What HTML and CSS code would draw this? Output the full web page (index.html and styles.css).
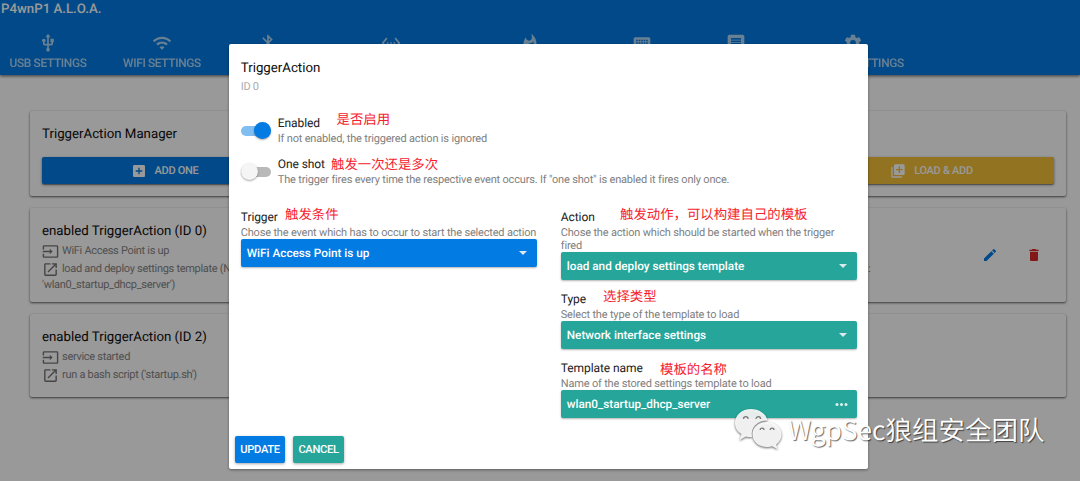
FILE: index.html
```html
<!DOCTYPE html>
<html lang="en">
<head>
<meta charset="utf-8">
<title>P4wnP1 A.L.O.A.</title>
<link rel="stylesheet" href="styles.css">
</head>
<body>
<header class="header">
  <div class="brand">P4wnP1 A.L.O.A.</div>
  <nav class="tabs">
    <div class="tab"><svg viewBox="0 0 24 24"><path d="M15 7v4h1v2h-3V5h2l-3-4-3 4h2v8H8v-2.070c.7-.37 1.200-1.080 1.200-1.930 0-1.210-.99-2.200-2.200-2.200S4.800 7.790 4.800 9c0 .85.5 1.560 1.200 1.930V13c0 1.110.89 2 2 2h3v3.050c-.71.37-1.200 1.100-1.200 1.950a2.200 2.200 0 0 0 4.400 0c0-.85-.49-1.580-1.200-1.950V15h3c1.110 0 2-.89 2-2v-2h1V7z"/></svg><span>USB SETTINGS</span></div>
    <div class="tab"><svg viewBox="0 0 24 24"><path d="M1 9l2 2c4.970-4.970 13.030-4.970 18 0l2-2C16.930 2.930 7.080 2.930 1 9zm8 8l3 3 3-3c-1.650-1.660-4.340-1.660-6 0zm-4-4l2 2c2.760-2.760 7.240-2.760 10 0l2-2C15.140 9.140 8.870 9.140 5 13z"/></svg><span>WIFI SETTINGS</span></div>
    <div class="tab"><svg viewBox="0 0 24 24"><path d="M17.710 7.710L12 2h-1v7.590L6.410 5 5 6.410 10.590 12 5 17.590 6.410 19 11 14.410V22h1l5.710-5.710-4.300-4.290 4.300-4.290zM13 5.830l1.880 1.880L13 9.590V5.830zm1.880 10.460L13 18.170v-3.760l1.880 1.880z"/></svg><span>BLUETOOTH</span></div>
    <div class="tab"><svg viewBox="0 0 24 24"><path d="M7.770 6.760L6.230 5.480.82 12l5.410 6.520 1.540-1.280L3.420 12l4.350-5.240zM7 13h2v-2H7v2zm10-2h-2v2h2v-2zm-6 2h2v-2h-2v2zm6.770-7.520l-1.540 1.280L20.580 12l-4.350 5.240 1.540 1.280L23.180 12l-5.410-6.520z"/></svg><span>NETWORK SETTINGS</span></div>
    <div class="tab"><svg viewBox="0 0 24 24"><path d="M13.500.67s.74 2.650.74 4.800c0 2.060-1.350 3.730-3.410 3.730-2.070 0-3.630-1.670-3.630-3.730l.03-.36C5.210 7.510 4 10.620 4 14c0 4.420 3.580 8 8 8s8-3.580 8-8C20 8.610 17.410 3.800 13.500.67zM11.710 19c-1.780 0-3.220-1.400-3.220-3.140 0-1.620 1.050-2.760 2.810-3.120 1.770-.36 3.600-1.210 4.620-2.580.39 1.290.59 2.650.59 4.040 0 2.650-2.150 4.800-4.800 4.800z"/></svg><span>TRIGGER ACTIONS</span></div>
    <div class="tab"><svg viewBox="0 0 24 24"><path d="M20 5H4c-1.100 0-1.990.9-1.990 2L2 17c0 1.100.9 2 2 2h16c1.100 0 2-.9 2-2V7c0-1.100-.9-2-2-2zm-9 3h2v2h-2V8zm0 3h2v2h-2v-2zM8 8h2v2H8V8zm0 3h2v2H8v-2zm-1 2H5v-2h2v2zm0-3H5V8h2v2zm9 7H8v-2h8v2zm0-4h-2v-2h2v2zm0-3h-2V8h2v2zm3 3h-2v-2h2v2zm0-3h-2V8h2v2z"/></svg><span>HIDSCRIPT</span></div>
    <div class="tab"><svg viewBox="0 0 24 24"><path d="M20 2H4c-1.100 0-2 .9-2 2v12c0 1.100.9 2 2 2h14l4 4V4c0-1.100-.9-2-2-2zm-2 12H6v-2h12v2zm0-3H6V9h12v2zm0-3H6V6h12v2z"/></svg><span>EVENT LOG</span></div>
    <div class="tab"><svg viewBox="0 0 24 24"><path d="M19.430 12.980c.04-.32.07-.64.07-.98s-.03-.66-.07-.98l2.110-1.650c.19-.15.24-.42.12-.64l-2-3.460c-.12-.22-.39-.3-.61-.22l-2.490 1c-.52-.4-1.080-.73-1.690-.98l-.38-2.650C14.460 2.180 14.250 2 14 2h-4c-.25 0-.46.18-.49.42l-.38 2.650c-.61.25-1.170.59-1.690.98l-2.490-1c-.23-.09-.49 0-.61.22l-2 3.460c-.13.22-.07.49.12.64l2.110 1.650c-.04.32-.07.65-.07.98s.03.66.07.98l-2.110 1.650c-.19.15-.24.42-.12.64l2 3.460c.12.22.39.3.61.22l2.490-1c.52.4 1.080.73 1.690.98l.38 2.650c.03.24.24.42.49.42h4c.25 0 .46-.18.49-.42l.38-2.650c.61-.25 1.170-.59 1.690-.98l2.490 1c.23.09.49 0 .61-.22l2-3.460c.12-.22.07-.49-.12-.64l-2.110-1.650zM12 15.500a3.500 3.500 0 1 1 0-7 3.500 3.500 0 0 1 0 7z"/></svg><span>GENERIC SETTINGS</span></div>
  </nav>
</header>
<main class="page">
  <section class="card manager">
    <h2 class="card-title">TriggerAction Manager</h2>
    <div class="manager-buttons">
      <div class="wide-btn blue"><svg viewBox="0 0 24 24"><path d="M19 3H5c-1.110 0-2 .9-2 2v14c0 1.100.89 2 2 2h14c1.100 0 2-.9 2-2V5c0-1.100-.9-2-2-2zm-2 10h-4v4h-2v-4H7v-2h4V7h2v4h4v2z"/></svg><span>ADD ONE</span></div>
      <div class="wide-btn amber"><svg viewBox="0 0 24 24"><path d="M4 6H2v14c0 1.100.9 2 2 2h14v-2H4V6zm16-4H8c-1.100 0-2 .9-2 2v12c0 1.100.9 2 2 2h12c1.100 0 2-.9 2-2V4c0-1.100-.9-2-2-2zm-1 9h-4v4h-2v-4H9V9h4V5h2v4h4v2z"/></svg><span>LOAD &amp; ADD</span></div>
    </div>
  </section>
  <section class="card entry entry-first">
    <div class="entry-text">
      <h2 class="card-title">enabled TriggerAction (ID 0)</h2>
      <p class="line"><svg viewBox="0 0 24 24"><path d="M21 3.010H3c-1.100 0-2 .9-2 2V9h2V4.990h18v14.030H3V15H1v4.010c0 1.100.9 1.980 2 1.980h18c1.100 0 2-.88 2-1.980v-14c0-1.110-.9-2-2-2zM11 16l4-4-4-4v3H1v2h10v3z"/></svg>WiFi Access Point is up</p>
      <p class="line"><svg viewBox="0 0 24 24"><path d="M19 19H5V5h7V3H5c-1.110 0-2 .9-2 2v14c0 1.100.89 2 2 2h14c1.100 0 2-.9 2-2v-7h-2v7zM14 3v2h3.590l-9.830 9.830 1.410 1.410L19 6.410V10h2V3h-7z"/></svg>load and deploy settings template (Network interface settings:</p>
      <p class="line">'wlan0_startup_dhcp_server')</p>
    </div>
    <div class="entry-actions">
      <svg class="edit" viewBox="0 0 24 24"><path d="M3 17.250V21h3.750L17.810 9.940l-3.750-3.750L3 17.250zM20.710 7.040a1 1 0 0 0 0-1.410l-2.340-2.340a1 1 0 0 0-1.410 0l-1.830 1.830 3.750 3.750 1.830-1.830z"/></svg>
      <svg class="trash" viewBox="0 0 24 24"><path d="M6 19c0 1.100.9 2 2 2h8c1.100 0 2-.9 2-2V7H6v12zM19 4h-3.500l-1-1h-5l-1 1H5v2h14V4z"/></svg>
    </div>
    <span class="cut">:</span>
  </section>
  <section class="card entry">
    <div class="entry-text">
      <h2 class="card-title">enabled TriggerAction (ID 2)</h2>
      <p class="line"><svg viewBox="0 0 24 24"><path d="M21 3.010H3c-1.100 0-2 .9-2 2V9h2V4.990h18v14.030H3V15H1v4.010c0 1.100.9 1.980 2 1.980h18c1.100 0 2-.88 2-1.980v-14c0-1.110-.9-2-2-2zM11 16l4-4-4-4v3H1v2h10v3z"/></svg>service started</p>
      <p class="line"><svg viewBox="0 0 24 24"><path d="M19 19H5V5h7V3H5c-1.110 0-2 .9-2 2v14c0 1.100.89 2 2 2h14c1.100 0 2-.9 2-2v-7h-2v7zM14 3v2h3.590l-9.830 9.830 1.410 1.410L19 6.410V10h2V3h-7z"/></svg>run a bash script ('startup.sh')</p>
    </div>
  </section>
</main>
<div class="backdrop">
  <div class="modal">
    <div class="modal-head">
      <div class="modal-title">TriggerAction</div>
      <div class="modal-sub">ID 0</div>
    </div>
    <div class="switch-row">
      <span class="toggle on"></span>
      <div class="field"><div class="label">Enabled</div><div class="hint">If not enabled, the triggered action is ignored</div></div>
    </div>
    <div class="switch-row">
      <span class="toggle"></span>
      <div class="field"><div class="label">One shot</div><div class="hint">The trigger fires every time the respective event occurs. If "one shot" is enabled it fires only once.</div></div>
    </div>
    <div class="columns">
      <div class="column">
        <div class="field"><div class="label">Trigger</div><div class="hint">Chose the event which has to occur to start the selected action</div>
          <div class="select blue"><span>WiFi Access Point is up</span><i class="caret"></i></div></div>
      </div>
      <div class="column">
        <div class="field"><div class="label">Action</div><div class="hint">Chose the action which should be started when the trigger<br>fired</div>
          <div class="select teal"><span>load and deploy settings template</span><i class="caret"></i></div></div>
        <div class="field"><div class="label">Type</div><div class="hint">Select the type of the template to load</div>
          <div class="select teal"><span>Network interface settings</span><i class="caret"></i></div></div>
        <div class="field"><div class="label">Template name</div><div class="hint">Name of the stored settings template to load</div>
          <div class="select teal"><span>wlan0_startup_dhcp_server</span><i class="dots"></i></div></div>
      </div>
    </div>
    <div class="modal-buttons"><div class="btn blue">UPDATE</div><div class="btn teal">CANCEL</div></div>
  </div>
</div>
<div class="note n1">是否启用</div>
<div class="note n2">触发一次还是多次</div>
<div class="note n3">触发条件</div>
<div class="note n4">触发动作，可以构建自己的模板</div>
<div class="note n5">选择类型</div>
<div class="note n6">模板的名称</div>
<div class="watermark">
  <svg viewBox="0 0 50 44"><path d="M17 1C8 1 1 7 1 15c0 5 2.500 8.500 6.500 11L5.500 32l6.500-3.500c2 .5 4 .7 6 .5C16 19 24 12 33.500 12.500 32 5.500 25 1 17 1z"/><path d="M33 14C25 14 18.500 19.500 18.500 26.500S25 39 33 39c2 0 3.500-.3 5.200-.8l5.300 2.800-1.400-4.500c3.300-2.400 5.400-6 5.400-10C47.500 19.500 41 14 33 14z"/><g class="eyes"><path d="M9.500 11a2.300 2.300 0 0 1 4.600 0M22 11a2.300 2.300 0 0 1 4.600 0M26.200 22a1.900 1.900 0 0 1 3.800 0M36.200 22a1.900 1.900 0 0 1 3.800 0"/></g></svg>
  <span>WgpSec狼组安全团队</span>
</div>
</body>
</html>
```
FILE: styles.css
```css
* { box-sizing: border-box; }
html, body { height: 100%; }
body { margin: 0; overflow: hidden; background: #fff; color: #0c0c0c; font-family: Roboto, "Noto Sans CJK SC", sans-serif; font-size: 13px; text-rendering: geometricPrecision; }
h2, p { margin: 0; font-weight: 400; }
.blue { background: #027be3; }
.teal { background: #26a69a; }
.amber { background: #f2c037; }

.header { height: 75px; background: #027be3; color: rgba(255,255,255,.8); box-shadow: 0 1px 3px rgba(0,0,0,.4), 0 1px 3px rgba(0,0,0,.3); }
.brand { height: 27px; padding-left: 1px; font-size: 13.250px; font-weight: 500; line-height: 19px; color: #fff; }
.tabs { display: grid; grid-template-columns: 96px 132px 80px 166px 112px 112px 76px 158px; padding-top: 6px; }
.tab { display: flex; flex-direction: column; align-items: center; gap: 3px; font-size: 11.900px; letter-spacing: -.35px; font-weight: 500; line-height: 15px; white-space: nowrap; opacity: .85; }
.tab svg { width: 20px; height: 20px; fill: currentColor; }

.page { padding: 36px 14px 0 30px; display: flex; flex-direction: column; gap: 12px; }
.card { padding: 0 12px; border-radius: 2px; background: #fff; box-shadow: 0 1px 3px rgba(0,0,0,.25), 0 1px 2px rgba(0,0,0,.45); }
.card-title { font-size: 13.250px; line-height: 20px; }
.manager { height: 85px; padding-top: 14px; display: flex; flex-direction: column; gap: 12px; }
.manager-buttons { display: grid; grid-template-columns: 245px 245px; justify-content: space-between; }
.wide-btn { height: 27px; display: flex; align-items: center; justify-content: center; gap: 8px; border-radius: 2px; color: #fff; font-size: 11px; letter-spacing: -.3px; line-height: 14px; padding-top: 1px; font-weight: 500; box-shadow: 0 1px 3px rgba(0,0,0,.4), 0 1px 1px rgba(0,0,0,.3); }
.wide-btn svg { width: 16px; height: 16px; fill: #fff; }
.entry { position: relative; height: 83px; padding-top: 14px; display: flex; justify-content: space-between; }
.entry-first { height: 94px; }
.entry-text { width: 800px; }
.line { display: flex; align-items: center; gap: 3px; height: 17.500px; font-size: 11px; letter-spacing: -.3px; color: #858585; white-space: nowrap; }
.line svg { width: 17px; height: 17px; fill: #757575; position: relative; top: 1px; }
.line:nth-child(4) { height: 15px; }
.entry-actions { display: flex; gap: 28px; padding: 25px 12px 0 0; }
.entry-actions svg { width: 16px; height: 16px; }
.edit { fill: #027be3; }
.trash { fill: #db2828; }
.cut { position: absolute; left: 838px; top: 54px; font-size: 10.600px; color: #757575; }

.backdrop { position: absolute; inset: 0; display: flex; justify-content: center; padding: 44px 0 12px 17px; background: rgba(0,0,0,.4); }
.modal { width: 639.500px; height: 425px; padding: 15px 12px 0; display: flex; flex-direction: column; background: #fff; border-radius: 2px; box-shadow: 0 1px 3px rgba(0,0,0,.4); }
.modal-head { height: 50px; }
.modal-title { font-size: 13.250px; line-height: 19px; }
.modal-sub { font-size: 11px; letter-spacing: -.3px; line-height: 17px; color: #aaa; }
.switch-row { height: 41px; display: flex; align-items: center; gap: 7px; }
.field { display: flex; flex-direction: column; }
.label { font-size: 12px; letter-spacing: -.08px; line-height: 16px; color: #212121; }
.hint { font-size: 11px; letter-spacing: -.18px; line-height: 13px; color: #808080; white-space: nowrap; padding-top: 1px; }
.toggle { width: 30px; height: 10px; margin-top: 2px; border-radius: 5px; background: #b9b9b9; display: flex; align-items: center; }
.toggle::before { content: ""; width: 17px; height: 17px; flex: none; border-radius: 50%; background: #f5f5f5; box-shadow: 0 1px 2px rgba(0,0,0,.35); }
.toggle.on { background: #80bdf1; justify-content: flex-end; }
.toggle.on::before { background: #027be3; }
.columns { height: 245px; display: grid; grid-template-columns: 296px 296px; gap: 24px; padding-top: 18px; }
.column { display: flex; flex-direction: column; gap: 11px; }
.select { height: 28px; padding: 0 10px 0 6px; display: flex; align-items: center; justify-content: space-between; border-radius: 2px; color: #fff; font-size: 11.750px; font-weight: 500; box-shadow: 0 1px 2px rgba(0,0,0,.3); }
.caret { border: 4px solid transparent; border-top-color: #dce9ef; border-bottom: 0; }
.dots { width: 3px; height: 3px; border-radius: 50%; background: #dff2f0; margin-right: 3.500px; box-shadow: -4.500px 0 #dff2f0, 4.500px 0 #dff2f0; }
.modal-buttons { display: flex; gap: 8px; margin-left: -6px; }
.btn { width: 50.500px; height: 27px; display: flex; align-items: center; justify-content: center; border-radius: 2px; color: #fff; font-size: 11.200px; letter-spacing: -.35px; font-weight: 500; box-shadow: 0 1px 3px rgba(0,0,0,.35); }

.note { position: absolute; color: #f5222d; font: 13.400px/20px "Noto Sans CJK SC", sans-serif; white-space: nowrap; }
.n1 { left: 336.500px; top: 108px; }
.n2 { left: 331px; top: 153px; }
.n3 { left: 285px; top: 203px; }
.n4 { left: 620px; top: 203px; }
.n5 { left: 603px; top: 285px; }
.n6 { left: 660px; top: 358px; }
.watermark { position: absolute; left: 734px; top: 408px; display: flex; align-items: center; gap: 4px; color: #fff; font: 350 26.500px/44px "Noto Sans CJK SC", sans-serif; white-space: nowrap; text-shadow: 1px 1px 1px rgba(0,0,0,.6); }
.watermark span { margin-top: -2px; }
.watermark svg { width: 50px; height: 44px; fill: rgba(255,255,255,.9); filter: drop-shadow(0 1px 1px rgba(0,0,0,.65)); }
.watermark .eyes { fill: none; stroke: #777; stroke-width: 1.300; }
```
